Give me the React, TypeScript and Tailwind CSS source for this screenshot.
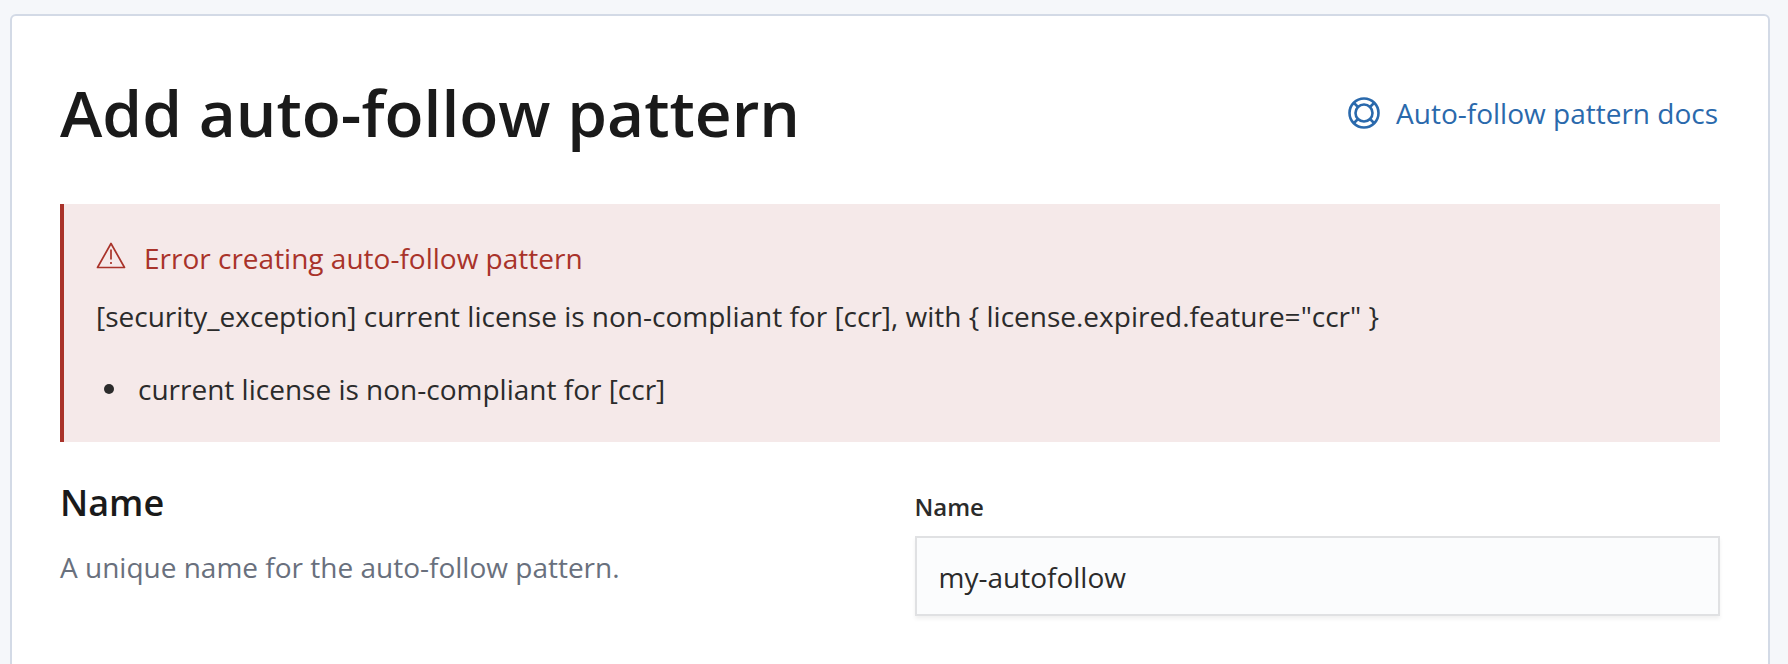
const font = "font-['Open_Sans',sans-serif]";

function DocsIcon() {
  return (
    <svg width="32" height="32" viewBox="0 0 32 32" fill="none" stroke="#2a69ac" className="shrink-0">
      <circle cx="16" cy="16" r="14.5" strokeWidth="2.6" />
      <circle cx="16" cy="16" r="8.5" strokeWidth="2.6" />
      <path d="M6 6l4.5 4.5M26 6l-4.5 4.5M6 26l4.5-4.5M26 26l-4.5-4.5" strokeWidth="2.6" />
    </svg>
  );
}

function WarningIcon() {
  return (
    <svg width="30" height="27" viewBox="0 0 30 27" fill="none" className="mb-[6px] shrink-0">
      <path d="M15 1.5 L28.5 25.5 H1.5 Z" stroke="#a9332a" strokeWidth="1.7" strokeLinejoin="round" />
      <path d="M15 7.5V17.5" stroke="#a9332a" strokeWidth="1.7" />
      <path d="M15 20V22" stroke="#a9332a" strokeWidth="1.7" />
    </svg>
  );
}

export default function App() {
  return (
    <div className={`${font} h-[664px] w-[1788px] overflow-hidden bg-[#f5f7fa] pl-[10px] pr-[18px] pt-[14px]`}>
      <div className="h-[700px] rounded-t-[6px] border-2 border-[#d3dae6] bg-white px-[48px] pt-[57px]">
        <div className="flex items-center justify-between">
          <h1 className="text-[64px] leading-[80px] font-semibold text-[#1a1a1a]">Add auto-follow pattern</h1>
          <a className="flex items-center gap-[16px] pr-[2px] text-[28px] leading-[40px] text-[#2a69ac]">
            <DocsIcon />
            <span>Auto-follow pattern docs</span>
          </a>
        </div>

        <div className="mt-[51px] h-[238px] border-l-4 border-[#a9332a] bg-[#f5e9e9] pl-[32px] pr-[32px] pt-[36px]">
          <div className="flex items-center gap-[18px] text-[28px] leading-[36px] text-[#a9332a]">
            <WarningIcon />
            <span>Error creating auto-follow pattern</span>
          </div>
          <p className="mt-[20px] text-[28px] leading-[40px] text-[#2b2b2b]">
            [security_exception] current license is non-compliant for [ccr], with {"{"} license.expired.feature="ccr" {"}"}
          </p>
          <ul className="mt-[33px] pl-[8px] text-[28px] leading-[40px] text-[#2b2b2b]">
            <li className="flex items-center gap-[24px]">
              <span className="size-[10px] rounded-full bg-[#2b2b2b]" />
              <span>current license is non-compliant for [ccr]</span>
            </li>
          </ul>
        </div>

        <div className="mt-[39px] flex">
          <div className="w-[854.5px] shrink-0">
            <h2 className="text-[36px] leading-[44px] font-semibold text-[#1a1a1a]">Name</h2>
            <p className="mt-[24px] text-[28px] leading-[36px] text-[#69707d]">A unique name for the auto-follow pattern.</p>
          </div>
          <div className="flex-1 pt-[12px]">
            <label className="block text-[24px] leading-[28px] font-semibold text-[#2b2b2b]">Name</label>
            <div className="mt-[15px] flex h-[80px] items-center border-2 border-[#e0e1e3] bg-[#fbfcfd] px-[22px] pt-[2px] text-[28px] text-[#2b2b2b] shadow-[0_3px_4px_rgba(0,0,0,0.06)]">
              my-autofollow
            </div>
          </div>
        </div>
      </div>
    </div>
  );
}
